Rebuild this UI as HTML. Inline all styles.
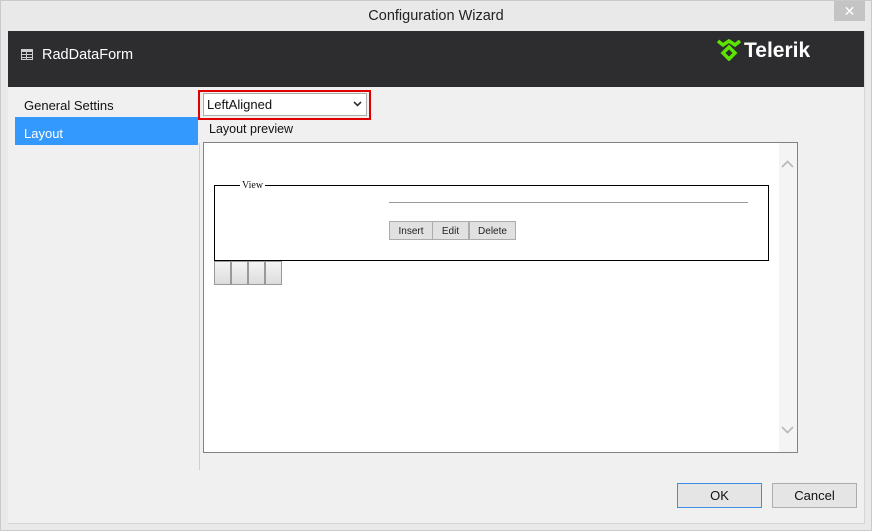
<!DOCTYPE html>
<html><head><style>
*{box-sizing:border-box;margin:0;padding:0}
body{width:872px;height:531px;background:#e9e9e9;font-family:"Liberation Sans",sans-serif;position:relative;overflow:hidden;box-shadow:inset 0 0 0 1px #c9c9c9}
.a{position:absolute}
.title{left:0;top:8px;width:872px;text-align:center;font-size:14.5px;color:#222}
.close{left:834px;top:1px;width:31px;height:20px;background:#c4c4c4;color:#fff;text-align:center;font-size:14px;line-height:20px}
.frame{left:8px;top:31px;width:857px;height:493px;background:#f0f0f0;border-right:1px solid #d5d5d5;border-bottom:1px solid #d5d5d5}
.hdr{left:8px;top:31px;width:856px;height:56px;background:#2d2d30}
.btn{border:1px solid #adadad;background:#e5e5e5;font-size:13px;text-align:center;line-height:24px;color:#111}
.sb{border:1px solid #999;background:linear-gradient(#f4f4f4,#dcdcdc)}
.vb{border:1px solid #acacac;background:#e1e1e1;font-size:10px;line-height:19px;text-align:center;color:#222;height:19px;top:221px}
</style></head><body>
<div class="a title">Configuration Wizard</div>
<div class="a close">✕</div>
<div class="a frame"></div>
<div class="a hdr"></div>
<svg class="a" style="left:21px;top:49px" width="12" height="11"><rect x="0" y="0" width="12" height="11" fill="#ccc"/><rect x="1" y="3" width="4" height="2" fill="#2d2d30"/><rect x="6" y="3" width="5" height="2" fill="#2d2d30"/><rect x="1" y="6" width="4" height="2" fill="#2d2d30"/><rect x="6" y="6" width="5" height="2" fill="#2d2d30"/><rect x="1" y="9" width="4" height="1" fill="#2d2d30"/><rect x="6" y="9" width="5" height="1" fill="#2d2d30"/></svg>
<div class="a" style="left:42px;top:47px;font-size:14.5px;color:#fff">RadDataForm</div>
<svg class="a" style="left:716px;top:37px" width="26" height="24" viewBox="0 0 26 24"><path d="M2 4 L7 8 L13 4 L19 8 L24 4" stroke="#5ce500" stroke-width="3.5" fill="none"/><path d="M13 10 L19 16 L13 22 L7 16 Z" stroke="#5ce500" stroke-width="3.5" fill="none"/></svg>
<div class="a" style="left:744px;top:39px;font-size:21px;font-weight:bold;color:#fff">Telerik</div>
<div class="a" style="left:24px;top:98px;font-size:13px;color:#111">General Settins</div>
<div class="a" style="left:15px;top:117px;width:183px;height:28px;background:#3399ff"></div>
<div class="a" style="left:24px;top:126px;font-size:13px;color:#fff">Layout</div>
<div class="a" style="left:199px;top:143px;width:1px;height:327px;background:#cfcfcf"></div>
<div class="a" style="left:198px;top:90px;width:173px;height:30px;border:2px solid #e00000"></div>
<div class="a" style="left:203px;top:93px;width:164px;height:23px;border:1px solid #acacac;background:#fff;font-size:13px;line-height:22px;padding-left:3px;color:#111">LeftAligned</div>
<svg class="a" style="left:353px;top:101px" width="9" height="6"><path d="M1 1 L4.5 4.5 L8 1" stroke="#333" stroke-width="1.6" fill="none"/></svg>
<div class="a" style="left:209px;top:122px;font-size:12.5px;color:#111">Layout preview</div>
<div class="a" style="left:203px;top:142px;width:595px;height:311px;border:1px solid #828282;background:#fff"></div>
<div class="a" style="left:779px;top:143px;width:18px;height:309px;background:#f4f4f4"></div>
<svg class="a" style="left:781px;top:160px" width="13" height="8"><path d="M1 7 L6.5 1.5 L12 7" stroke="#bbb" stroke-width="1.8" fill="none"/></svg>
<svg class="a" style="left:781px;top:426px" width="13" height="8"><path d="M1 1 L6.5 6.5 L12 1" stroke="#bbb" stroke-width="1.8" fill="none"/></svg>
<div class="a" style="left:214px;top:185px;width:555px;height:76px;border:1px solid #000;border-width:1.5px"></div>
<div class="a" style="left:240px;top:180px;background:#fff;padding:0 2px;font-family:'Liberation Serif',serif;font-size:10px;color:#111">View</div>
<div class="a" style="left:389px;top:202px;width:359px;height:1px;background:#999"></div>
<div class="a vb" style="left:389px;width:44px">Insert</div>
<div class="a vb" style="left:432px;width:37px">Edit</div>
<div class="a vb" style="left:469px;width:47px">Delete</div>
<div class="a sb" style="left:214px;top:261px;width:17px;height:24px"></div>
<div class="a sb" style="left:231px;top:261px;width:17px;height:24px"></div>
<div class="a sb" style="left:248px;top:261px;width:17px;height:24px"></div>
<div class="a sb" style="left:265px;top:261px;width:17px;height:24px"></div>
<div class="a btn" style="left:677px;top:483px;width:85px;height:25px;border-color:#3c8fe0">OK</div>
<div class="a btn" style="left:772px;top:483px;width:85px;height:25px">Cancel</div>
</body></html>
